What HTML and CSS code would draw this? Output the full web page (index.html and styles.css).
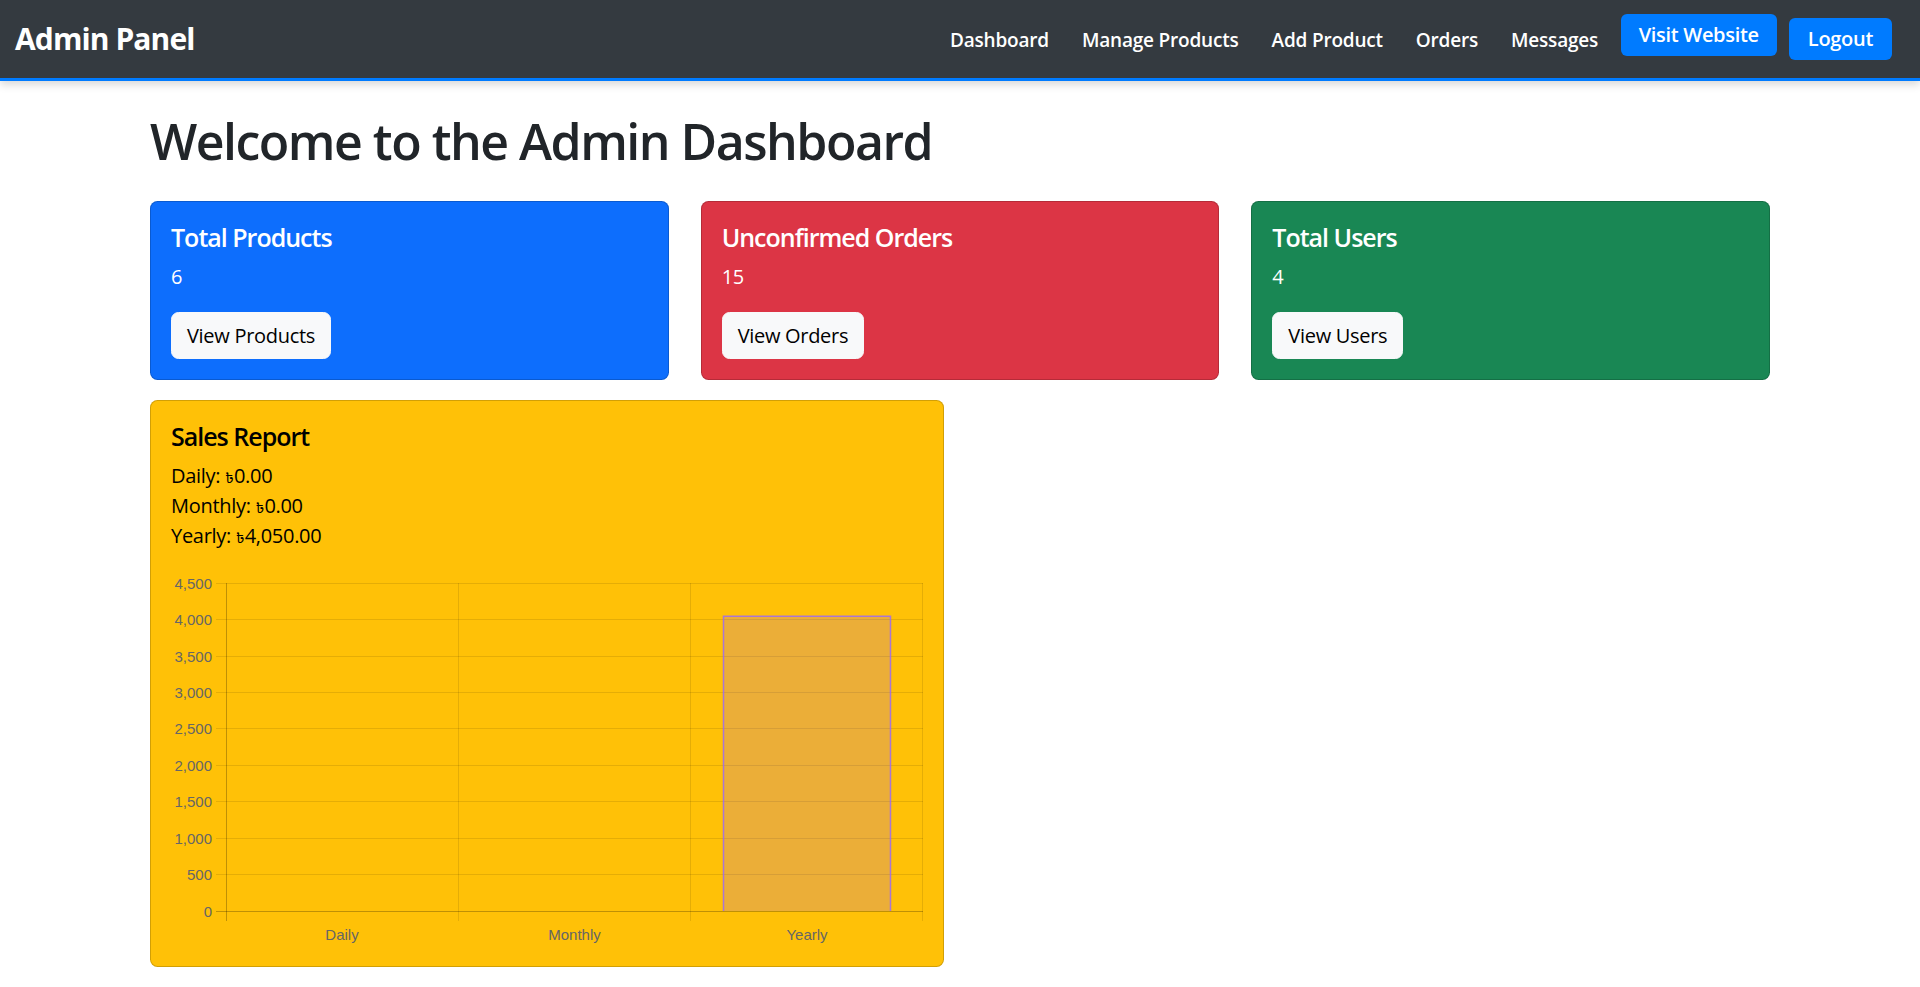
FILE: index.html
```html
<!DOCTYPE html>
<html lang="en">
<head>
<meta charset="utf-8">
<title>Admin Dashboard</title>
<link rel="stylesheet" href="styles.css">
</head>
<body>
<nav class="navbar">
  <a class="brand" href="#">Admin Panel</a>
  <ul class="nav-list">
    <li><a class="nav-link" href="#">Dashboard</a></li>
    <li><a class="nav-link" href="#">Manage Products</a></li>
    <li><a class="nav-link" href="#">Add Product</a></li>
    <li><a class="nav-link" href="#">Orders</a></li>
    <li><a class="nav-link" href="#">Messages</a></li>
    <li class="visit-item"><a class="nav-btn" href="#">Visit Website</a></li>
    <li class="logout-item"><button class="nav-btn logout-btn" type="button">Logout</button></li>
  </ul>
</nav>

<main class="container">
  <h1 class="page-title">Welcome to the Admin Dashboard</h1>

  <div class="stat-row">
    <div class="card card-blue">
      <h5 class="card-title">Total Products</h5>
      <p class="card-text">6</p>
      <a class="btn-light" href="#">View Products</a>
    </div>
    <div class="card card-red">
      <h5 class="card-title">Unconfirmed Orders</h5>
      <p class="card-text">15</p>
      <a class="btn-light" href="#">View Orders</a>
    </div>
    <div class="card card-green">
      <h5 class="card-title">Total Users</h5>
      <p class="card-text">4</p>
      <a class="btn-light" href="#">View Users</a>
    </div>
  </div>

  <div class="report-row">
    <div class="card card-yellow">
      <h5 class="card-title">Sales Report</h5>
      <p class="card-text">Daily: <span class="taka">৳</span>0.00<br>Monthly: <span class="taka">৳</span>0.00<br>Yearly: <span class="taka">৳</span>4,050.00</p>
      <svg class="chart" width="752" height="375" viewBox="0 0 752 375" xmlns="http://www.w3.org/2000/svg">
        <g class="grid">
          <line x1="45" y1="12.5" x2="752" y2="12.5"/>
          <line x1="45" y1="48.5" x2="752" y2="48.5"/>
          <line x1="45" y1="85.5" x2="752" y2="85.5"/>
          <line x1="45" y1="121.5" x2="752" y2="121.5"/>
          <line x1="45" y1="157.5" x2="752" y2="157.5"/>
          <line x1="45" y1="194.5" x2="752" y2="194.5"/>
          <line x1="45" y1="230.5" x2="752" y2="230.5"/>
          <line x1="45" y1="267.5" x2="752" y2="267.5"/>
          <line x1="45" y1="303.5" x2="752" y2="303.5"/>
          <line x1="287.5" y1="12" x2="287.5" y2="350"/>
          <line x1="519.5" y1="12" x2="519.5" y2="350"/>
          <line x1="751.5" y1="12" x2="751.5" y2="350"/>
        </g>
        <g class="axis">
          <line x1="45" y1="340.5" x2="752" y2="340.5"/>
          <line x1="55.5" y1="12" x2="55.5" y2="350"/>
        </g>
        <rect class="bar" x="552.5" y="45.3" width="167" height="294.7"/>
        <path class="bar-edge" d="M552.5 340 V45.3 H719.5 V340"/>
        <g class="ylabels">
          <text x="41" y="17.5">4,500</text>
          <text x="41" y="54">4,000</text>
          <text x="41" y="90.5">3,500</text>
          <text x="41" y="127">3,000</text>
          <text x="41" y="163">2,500</text>
          <text x="41" y="199.5">2,000</text>
          <text x="41" y="236">1,500</text>
          <text x="41" y="272.5">1,000</text>
          <text x="41" y="309">500</text>
          <text x="41" y="345.5">0</text>
        </g>
        <g class="xlabels">
          <text x="171" y="368.5">Daily</text>
          <text x="403.5" y="368.5">Monthly</text>
          <text x="636" y="368.5">Yearly</text>
        </g>
      </svg>
    </div>
  </div>
</main>
</body>
</html>
```

FILE: styles.css
```css
* {
  box-sizing: border-box;
}

html, body {
  margin: 0;
  padding: 0;
}

body {
  font-family: "Open Sans", "Noto Sans", "Noto Sans Bengali", "DejaVu Sans", sans-serif;
  font-size: 20px;
  line-height: 1.5;
  letter-spacing: -0.3px;
  color: #212529;
  background: #fff;
}

a {
  text-decoration: none;
}

/* ---------- navbar ---------- */
.navbar {
  display: flex;
  align-items: center;
  height: 81px;
  padding: 0 28px 0 15px;
  background: #343a40;
  border-bottom: 3px solid #007bff;
  box-shadow: 0 4px 8px rgba(0, 0, 0, 0.15);
}

.brand {
  color: #fff;
  font-size: 30px;
  font-weight: 700;
  line-height: 1.2;
  letter-spacing: -0.9px;
}

.nav-list {
  display: flex;
  align-items: center;
  align-self: stretch;
  list-style: none;
  margin: 0 0 0 auto;
  padding: 0;
}

.nav-link {
  display: block;
  padding: 0 16.5px;
  color: #fff;
  font-size: 19px;
  font-weight: 600;
  line-height: 30px;
  letter-spacing: -0.2px;
  margin-top: 2px;
}

.nav-btn {
  display: block;
  height: 42px;
  padding: 0 18px;
  border: 0;
  border-radius: 6px;
  background: #007bff;
  color: #fff;
  font-family: inherit;
  font-size: 20px;
  font-weight: 600;
  line-height: 42px;
  letter-spacing: -0.3px;
}

.logout-btn {
  padding: 0 19px;
}

.visit-item {
  align-self: flex-start;
  margin-top: 14px;
  margin-left: 6px;
}

.logout-item {
  margin-left: 12px;
}

/* ---------- content ---------- */
.container {
  width: 1620px;
  margin: 0 auto;
  padding-top: 30px;
}

.page-title {
  margin: 0 0 30px;
  font-size: 50px;
  font-weight: 600;
  line-height: 1.2;
  letter-spacing: -1.5px;
}

.stat-row,
.report-row {
  display: grid;
  gap: 32px;
  margin-bottom: 20px;
}

.stat-row {
  grid-template-columns: repeat(3, 1fr);
}

.report-row {
  grid-template-columns: repeat(2, 1fr);
}

.card {
  padding: 20px;
  border: 1px solid rgba(0, 0, 0, 0.175);
  border-radius: 7.5px;
  color: #fff;
}

.card-blue { background: #0d6efd; }
.card-red { background: #dc3545; }
.card-green { background: #198754; }
.card-yellow { background: #ffc107; color: #000; }

.card-title {
  margin: 0 0 10px;
  font-size: 25px;
  font-weight: 600;
  line-height: 1.2;
  letter-spacing: -1px;
}

.card-text {
  margin: 0 0 20px;
}

.taka {
  font-size: 15px;
  letter-spacing: 0;
}

.btn-light {
  display: inline-block;
  padding: 7.5px 15px;
  border: 1px solid #f8f9fa;
  border-radius: 7.5px;
  background: #f8f9fa;
  color: #000;
  font-size: 20px;
  line-height: 30px;
}

/* ---------- chart ---------- */
.chart {
  display: block;
}

.grid line {
  stroke: rgba(0, 0, 0, 0.1);
  stroke-width: 1;
}

.axis line {
  stroke: rgba(0, 0, 0, 0.25);
  stroke-width: 1;
}

.bar {
  fill: rgba(153, 102, 255, 0.2);
}

.bar-edge {
  fill: none;
  stroke: rgba(153, 102, 255, 0.8);
  stroke-width: 1.5;
}

.ylabels text,
.xlabels text {
  font-family: "Liberation Sans", Arial, sans-serif;
  font-size: 15px;
  letter-spacing: 0;
  fill: #666;
}

.ylabels text {
  text-anchor: end;
}

.xlabels text {
  text-anchor: middle;
}
```
